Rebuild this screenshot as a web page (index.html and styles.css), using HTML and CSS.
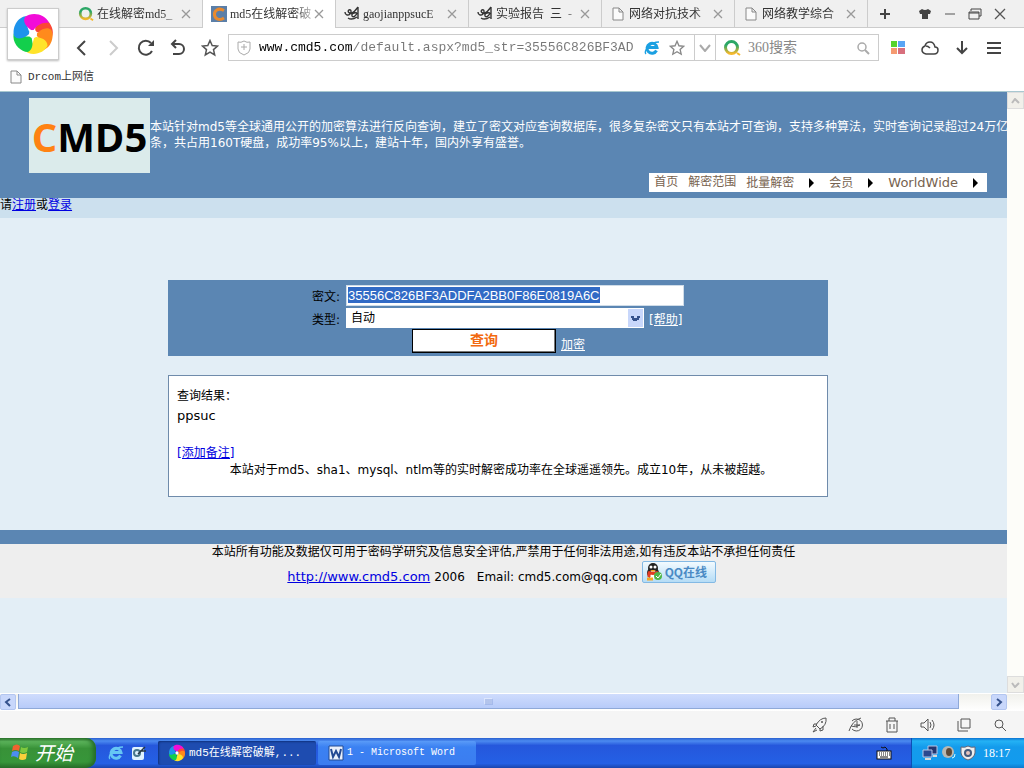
FILE: index.html
```html
<!DOCTYPE html>
<html lang="zh-CN">
<head>
<meta charset="utf-8">
<title>md5在线解密破解</title>
<link rel="stylesheet" href="styles.css">
</head>
<body>
<svg class="defs" width="0" height="0" aria-hidden="true">
  <defs>
    <linearGradient id="ring" x1="0" y1="0" x2="0" y2="1"><stop offset="0.3" stop-color="#2ba766"/><stop offset="1" stop-color="#f5b82c"/></linearGradient>
    <symbol id="so" viewBox="0 0 18 18"><circle cx="8.500" cy="8.500" r="6" fill="none" stroke="url(#ring)" stroke-width="3"/><path d="M14 14l3 2" stroke="#f5b82c" stroke-width="2"/></symbol>
    <symbol id="close" viewBox="0 0 10 10"><path d="M1 1l8 8M9 1l-8 8" stroke="#999" stroke-width="1.300" fill="none"/></symbol>
    <symbol id="doc" viewBox="0 0 12 14"><path d="M1 1h6l4 4v8H1zM7 1v4h4" fill="#fbfbfb" stroke="#888"/></symbol>
    <symbol id="reader" viewBox="0 0 16 16"><path d="M1 6c0 3 3 4 5 2s1-5-1-4 0 4 3 3 4-4 6-6M14 1v12M13 7c-3-1-6 1-5 3s4 0 5-3M4 12c3 2 6 1 9-1" fill="none" stroke="#333" stroke-width="1.400"/></symbol>
    <symbol id="pinwheel" viewBox="-22 -22 44 44">
      <path transform="rotate(55)" d="M0-3C-6-6-11-12-8-17-2-22 12-21 15-10 9-12 4-9 0-3z" fill="#fb4836"/>
      <path transform="rotate(103)" d="M0-3C-6-6-11-12-8-17-2-22 12-21 15-10 9-12 4-9 0-3z" fill="#ff8a1c"/>
      <path transform="rotate(155)" d="M0-3C-6-6-11-12-8-17-2-22 12-21 15-10 9-12 4-9 0-3z" fill="#ffe32a"/>
      <path transform="rotate(222)" d="M0-3C-6-6-11-12-8-17-2-22 14-21 16-8 9-10 4-8 0-3z" fill="#13cf4c"/>
      <path transform="rotate(288)" d="M0-3C-6-6-11-12-8-17-2-22 14-21 16-8 9-10 4-8 0-3z" fill="#1d93ec"/>
      <path d="M0-3C-6-6-11-12-8-17-2-22 12-21 16-11 9-12 4-9 0-3z" fill="#f20cd8"/>
      <circle r="4" fill="#fff"/>
    </symbol>
    <symbol id="ie" viewBox="0 0 16 16"><path d="M12.500 10.500A5 5 0 1 1 13 7.500H4.500" fill="none" stroke="currentColor" stroke-width="3"/><path d="M2 14C-1 12 6 2 15 2" fill="none" stroke="currentColor" stroke-width="1.500"/></symbol>
    <symbol id="star" viewBox="0 0 18 18"><path d="M9 1.500l2.200 5 5.300.500-4 3.600 1.200 5.400L9 13.200 4.300 16l1.200-5.400-4-3.600 5.300-.500z" fill="none" stroke="currentColor" stroke-width="1.500"/></symbol>
    <symbol id="lens" viewBox="0 0 14 14"><circle cx="6" cy="6" r="4" fill="none" stroke="currentColor" stroke-width="1.500"/><path d="M9 9l4 4" stroke="currentColor" stroke-width="2"/></symbol>
  </defs>
</svg>

<header class="chrome">
  <div class="brand"><svg width="44" height="44"><use href="#pinwheel"/></svg></div>
  <div class="tabs">
    <div class="tab"><svg width="16" height="16"><use href="#so"/></svg><span class="tab-text">在线解密md5_</span><button class="plain" aria-label="关闭"><svg width="10" height="10"><use href="#close"/></svg></button></div>
    <div class="tab active"><svg width="16" height="16" viewBox="0 0 16 16"><path d="M0 0h16v16H0z" fill="#5b7fa8"/><path d="M13 4.500C7 1 3 5 3.500 9s5 6 9.500 3" fill="none" stroke="#e88a2e" stroke-width="3"/></svg><span class="tab-text">md5在线解密破</span><button class="plain" aria-label="关闭"><svg width="10" height="10"><use href="#close"/></svg></button></div>
    <div class="tab"><svg width="16" height="16"><use href="#reader"/></svg><span class="tab-text">gaojianppsucE</span><button class="plain" aria-label="关闭"><svg width="10" height="10"><use href="#close"/></svg></button></div>
    <div class="tab"><svg width="16" height="16"><use href="#reader"/></svg><span class="tab-text">实验报告&nbsp; 三&nbsp; -</span><button class="plain" aria-label="关闭"><svg width="10" height="10"><use href="#close"/></svg></button></div>
    <div class="tab"><svg width="16" height="14"><use href="#doc"/></svg><span class="tab-text">网络对抗技术</span><button class="plain" aria-label="关闭"><svg width="10" height="10"><use href="#close"/></svg></button></div>
    <div class="tab"><svg width="16" height="14"><use href="#doc"/></svg><span class="tab-text">网络教学综合</span><button class="plain" aria-label="关闭"><svg width="10" height="10"><use href="#close"/></svg></button></div>
    <button class="plain add" aria-label="新标签"><svg width="12" height="12"><path d="M6 1v10M1 6h10" stroke="#444" stroke-width="2"/></svg></button>
    <div class="window-tools">
      <button class="plain" aria-label="皮肤"><svg width="14" height="12"><path d="M4 1q3 2 6 0l3 2-1 3h-2v5H4V6H2L1 3z" fill="#444"/></svg></button>
      <button class="plain" aria-label="最小化"><svg width="12" height="12"><path d="M1 6h10" stroke="#555"/></svg></button>
      <button class="plain" aria-label="还原"><svg width="14" height="12"><path d="M3 3V1h10v7h-2M1 4h10v7H1zM1 5h10" fill="none" stroke="#444"/></svg></button>
      <button class="plain" aria-label="关闭窗口"><svg width="12" height="12"><path d="M1 1l10 10M11 1L1 11" stroke="#555" stroke-width="1.300"/></svg></button>
    </div>
  </div>
  <div class="toolbar">
    <button class="plain tool" aria-label="后退"><svg width="16" height="18"><path d="M11 2L4 9l7 7" fill="none" stroke="#444" stroke-width="2"/></svg></button>
    <button class="plain tool" aria-label="前进"><svg width="16" height="18"><path d="M4 2l7 7-7 7" fill="none" stroke="#ccc" stroke-width="2"/></svg></button>
    <button class="plain tool" aria-label="刷新"><svg width="18" height="18"><path d="M15 12A7 7 0 1 1 14 4" fill="none" stroke="#444" stroke-width="2"/><path d="M17 1v6h-6z" fill="#444"/></svg></button>
    <button class="plain tool" aria-label="恢复"><svg width="18" height="18"><path d="M7 1L3 5l4 4M3 5h7a5 5 0 0 1 0 10H4" fill="none" stroke="#444" stroke-width="2"/></svg></button>
    <button class="plain tool" aria-label="收藏"><svg width="18" height="18"><use href="#star"/></svg></button>
    <div class="address">
      <svg class="shield" width="14" height="16"><path d="M1 2q3 1 6-1 3 2 6 1v7q0 4-6 6-6-2-6-6zM7 4v6M4 7h6" fill="none" stroke="#aaa"/></svg>
      <input class="url" type="text" aria-label="地址" value="www.cmd5.com/default.aspx?md5_str=35556C826BF3AD">
      <svg class="ie-blue" width="16" height="16"><use href="#ie"/></svg>
      <button class="plain address-star" aria-label="收藏网址"><svg width="16" height="16"><use href="#star"/></svg></button>
      <button class="plain drop" aria-label="展开"><svg width="12" height="8"><path d="M1 1l5 6 5-6" fill="none" stroke="#aaa" stroke-width="2"/></svg></button>
      <svg class="so-search" width="18" height="18"><use href="#so"/></svg>
      <input class="search" type="text" aria-label="搜索" placeholder="360搜索">
      <button class="plain lens" aria-label="搜索"><svg width="14" height="14"><use href="#lens"/></svg></button>
    </div>
    <button class="plain tool" aria-label="应用"><svg width="14" height="14"><path d="M0 0h6v6H0z" fill="#56d32c"/><path d="M7 0h7v6H7z" fill="#58a5f5"/><path d="M0 7h6v6H0z" fill="#f59a70"/><path d="M7 7h7v6H7z" fill="#d86f7d"/></svg></button>
    <button class="plain tool" aria-label="云"><svg width="18" height="14"><path d="M5 13Q1 12 1 9t3-4q1-4 5-4t5 5q3 0 3 3 0 4-4 4zM5 5q2 0 4 2" fill="none" stroke="#444" stroke-width="1.500"/></svg></button>
    <button class="plain tool" aria-label="下载"><svg width="14" height="14"><path d="M7 0v12M2 7l5 5 5-5" fill="none" stroke="#444" stroke-width="2"/></svg></button>
    <button class="plain tool" aria-label="菜单"><svg width="14" height="12"><path d="M0 1h14M0 6h14M0 11h14" stroke="#444" stroke-width="2"/></svg></button>
  </div>
  <div class="bookmarks"><svg width="12" height="14"><use href="#doc"/></svg><a class="bookmark" href="#">Drcom上网信</a></div>
</header>

<div class="view">
  <main class="page">
    <div class="banner">
      <div class="intro">
        <div class="logo"><span class="logo-c">C</span>MD5</div>
        <p class="blurb">本站针对md5等全球通用公开的加密算法进行反向查询，建立了密文对应查询数据库，很多复杂密文只有本站才可查询，支持多种算法，实时查询记录超过24万亿<br>条，共占用160T硬盘，成功率95%以上，建站十年，国内外享有盛誉。</p>
      </div>
      <nav class="menu">
        <a href="#">首页</a><a href="#">解密范围</a><a class="more" href="#">批量解密</a><a class="more" href="#">会员</a><a class="more latin" href="#">WorldWide</a>
      </nav>
    </div>
    <div class="login">请<a href="#">注册</a>或<a href="#">登录</a></div>
    <div class="content">
      <form class="query">
        <label class="label" for="cipher">密文:</label>
        <input class="field" id="cipher" type="text" value="35556C826BF3ADDFA2BB0F86E0819A6C">
        <label class="label" for="kind">类型:</label>
        <div class="row"><select class="kind" id="kind"><option>自动</option></select><a class="light" href="#">[帮助]</a></div>
        <div class="row actions"><button class="submit" type="button">查询</button><a class="light low" href="#">加密</a></div>
      </form>
      <section class="result">
        <p>查询结果：</p>
        <p class="latin">ppsuc</p>
        <p class="note"><a href="#">[添加备注]</a></p>
        <p class="claim">本站对于md5、sha1、mysql、ntlm等的实时解密成功率在全球遥遥领先。成立10年，从未被超越。</p>
      </section>
    </div>
    <footer class="footer">
      <p>本站所有功能及数据仅可用于密码学研究及信息安全评估,严禁用于任何非法用途,如有违反本站不承担任何责任</p>
      <div class="contact"><a class="latin" href="#">http://www.cmd5.com</a><span class="year">2006</span><span>Email: cmd5.com@qq.com</span>
        <button class="qq" type="button"><svg width="18" height="18"><ellipse cx="8" cy="10" rx="6" ry="6" fill="#222"/><circle cx="8" cy="5" r="5" fill="#222"/><ellipse cx="8" cy="12" rx="4" ry="4" fill="#fff"/><circle cx="6" cy="4" r="1.500" fill="#fff"/><circle cx="10" cy="4" r="1.500" fill="#fff"/><path d="M5 7h6l-3 2z" fill="#f4a623"/><path d="M3 9q5 3 10 0M4 10v4" stroke="#e33b22" stroke-width="3" fill="none"/><path d="M2 16h6" stroke="#f4a623" stroke-width="3"/><circle cx="13" cy="13" r="4" fill="#4eb648"/><path d="M11 13l2 2 3-4" stroke="#fff" fill="none"/></svg>QQ在线</button>
      </div>
    </footer>
  </main>
  <div class="vbar"><button class="vbtn" aria-label="向上"><svg width="9" height="6"><path d="M1 5l3-4 4 4" fill="none" stroke="#bbb" stroke-width="2"/></svg></button><button class="vbtn" aria-label="向下"><svg width="9" height="6"><path d="M1 1l3 4 4-4" fill="none" stroke="#bbb" stroke-width="2"/></svg></button></div>
</div>
<div class="hbar">
  <button class="hbtn" aria-label="向左"><svg width="8" height="9"><path d="M6 1L2 4l4 4" fill="none" stroke="#35528c" stroke-width="2"/></svg></button>
  <div class="thumb"><svg width="9" height="8"><path d="M1 1v6M3 1v6M5 1v6M7 1v6" stroke="#f3f7ff"/><path d="M2 2v6M4 2v6M6 2v6M8 2v6" stroke="#8ca4dc"/></svg></div>
  <button class="hbtn" aria-label="向右"><svg width="8" height="9"><path d="M2 1l4 3-4 4" fill="none" stroke="#35528c" stroke-width="2"/></svg></button>
</div>
<div class="status">
  <button class="plain" aria-label="加速"><svg width="16" height="16"><path d="M14 1Q8 1 4 8l4 4q7-4 6-11zM5 7H2l-1 3 3-1M8 11v3l3-1V9M4 11l-3 4 4-2" fill="none" stroke="#555"/><circle cx="10" cy="5" r="1" fill="#555"/></svg></button>
  <button class="plain" aria-label="模式"><svg width="16" height="16"><path d="M4 4a6 6 0 1 1 0 8M1 14Q4 4 13 1M3 9q4 2 9-1M9 4v7M6 8h6" fill="none" stroke="#555"/></svg></button>
  <button class="plain" aria-label="清理"><svg width="14" height="16"><path d="M1 4h12M4 4V1h6v3M2 4v11h10V4M5 7v5M9 7v5" fill="none" stroke="#555"/></svg></button>
  <button class="plain" aria-label="声音"><svg width="16" height="14"><path d="M1 5h3l4-4v12L4 9H1zM10 4q2 3 0 6M12 2q4 5 0 10" fill="none" stroke="#555"/></svg></button>
  <button class="plain" aria-label="窗口"><svg width="14" height="14"><path d="M4 1h9v9H4zM1 3v10h10" fill="none" stroke="#555"/></svg></button>
  <button class="plain" aria-label="缩放"><svg width="12" height="12" viewBox="0 0 12 12"><circle cx="5" cy="5" r="4" fill="none" stroke="#555"/><path d="M8 8l4 4" stroke="#555"/></svg></button>
</div>
<footer class="taskbar">
  <button class="start"><svg width="20" height="20"><path d="M3 4q4-3 7 0L9 9Q5 7 2 9z" fill="#f0632f"/><path d="M11 5q3 2 7 0l-1 5q-4 2-7 0z" fill="#7fc83e"/><path d="M2 10q4-2 7 0l-1 6q-4-3-7-1z" fill="#4d8df1"/><path d="M10 11q3 2 7 0l-1 6q-4 2-7 0z" fill="#fbd03b"/></svg>开始</button>
  <div class="quick"><svg class="ie-light" width="16" height="16"><use href="#ie"/></svg><svg width="16" height="16"><rect x="1" y="2" width="12" height="13" rx="2" fill="#dff2ff"/><circle cx="6" cy="8" r="3" fill="none" stroke="#47768b" stroke-width="2"/><path d="M7 9l7-7M9 6h6" stroke="#263744" stroke-width="1.500"/></svg></div>
  <button class="task pressed"><svg width="18" height="18"><use href="#pinwheel"/></svg>md5在线解密破解,...</button>
  <button class="task word"><svg width="16" height="16"><path d="M1 1h14v14H1z" fill="#e9f0fb" stroke="#234a93"/><path d="M3 4l2 8 3-6 3 6 2-8" fill="none" stroke="#234a93" stroke-width="2"/></svg>1 - Microsoft Word</button>
  <svg class="keyboard" width="16" height="14"><path d="M5 1l2 1 2-1 2 2v2" fill="none" stroke="#111"/><rect x="1" y="5" width="14" height="8" fill="#fff" stroke="#111"/><path d="M3 7h11M3 9h11" stroke="#111" stroke-dasharray="1 1"/><path d="M4 11h8" stroke="#111"/></svg>
  <div class="tray">
    <svg width="16" height="16"><path d="M6 1h9v8H6z" fill="#24356e" stroke="#b9c6e6"/><path d="M1 5h9v7H1z" fill="#2b478f" stroke="#b9c6e6"/><path d="M3 14h6M11 11h4" stroke="#d8d8d8" stroke-width="2"/></svg>
    <svg width="16" height="16"><circle cx="7" cy="7" r="6" fill="#b8b8b2"/><ellipse cx="8" cy="7" rx="3" ry="4" fill="#5d4938"/><path d="M11 13q3 0 3-4" fill="none" stroke="#dff" /></svg>
    <svg width="16" height="16"><path d="M1 2q4 1 7-1 3 2 7 1v6q-1 5-7 7-6-2-7-7z" fill="#eee" stroke="#667"/><circle cx="8" cy="8" r="4" fill="#435a7d"/><circle cx="8" cy="8" r="2" fill="#e8c3bc"/></svg>
    <span class="clock">18:17</span>
  </div>
</footer>
</body>
</html>
```
FILE: styles.css
```css
* { box-sizing: border-box; }
body {
  margin: 0;
  min-height: 100vh;
  display: flex;
  flex-direction: column;
  font: 12px/16px "DejaVu Sans", "Noto Sans CJK SC", sans-serif;
  color: #000;
  background: #fff;
}
p { margin: 0; }
svg { display: block; flex: none; }
.defs { position: absolute; }
a { color: #0000e0; }
.latin { font-size: 13px; }
.plain {
  display: flex;
  align-items: center;
  justify-content: center;
  padding: 0;
  border: 0;
  background: none;
  color: #555;
}

/* browser frame */
.chrome {
  position: relative;
  border-bottom: 1px solid #a8c8d0;
}
.brand {
  position: absolute;
  left: 7px;
  top: 8px;
  padding: 3px;
  border: 1px solid #ccc;
  background: #fff;
  box-shadow: 0 1px 2px #bbb;
}
.tabs {
  display: flex;
  height: 28px;
  padding-left: 70px;
  background: #f0f0f0;
  box-shadow: inset 0 -1px #ccc;
}
.tab {
  display: flex;
  align-items: center;
  gap: 3px;
  width: 133px;
  padding: 0 11px 0 8px;
  border-right: 1px solid #ccc;
  color: #333;
}
.tab.active { background: #fff; }
.tab-text {
  flex: 1;
  white-space: nowrap;
  font: 12px/16px "Liberation Serif", "Noto Sans CJK SC", serif;
  mask-image: linear-gradient(90deg, #000 80%, #0005);
}
.add { width: 34px; }
.window-tools {
  display: flex;
  gap: 12px;
  margin-left: auto;
  padding-right: 18px;
}
.toolbar {
  display: flex;
  align-items: center;
  height: 39px;
  padding: 0 14px 0 66px;
}
.tool { width: 32px; height: 30px; }
.address {
  flex: 1;
  display: flex;
  align-items: center;
  height: 27px;
  margin: 0 3px 0 2px;
  border: 1px solid #ccc;
}
.shield { margin: 0 8px; }
.url {
  flex: 1;
  min-width: 0;
  padding: 0;
  border: 0;
  outline: 0;
  font: 13px/20px "Liberation Mono", monospace;
  color: transparent;
  background: linear-gradient(90deg, #000 94px, #777 94px);
  background-clip: text;
}
.ie-blue { color: #1ba0e2; }
.address-star { width: 34px; color: #888; }
.drop {
  width: 22px;
  height: 25px;
  border: solid #ccc;
  border-width: 0 1px;
}
.so-search { margin: 0 7px; }
.search {
  width: 100px;
  padding: 0;
  border: 0;
  font: 14px/20px "Liberation Serif", "Noto Sans CJK SC", serif;
}
.search::placeholder { color: #888; }
.lens { width: 30px; color: #aaa; }
.bookmarks {
  display: flex;
  align-items: center;
  gap: 6px;
  height: 24px;
  padding: 0 10px 4px;
}
.bookmark {
  font: 11px/16px "Liberation Mono", "Noto Sans CJK SC", monospace;
  color: #333;
  text-decoration: none;
}

/* web page */
.view { flex: 1; display: flex; }
.page { flex: 1; min-width: 0; background: #e3eef6; }
.banner {
  display: flex;
  flex-direction: column;
  height: 106px;
  padding: 6px 0 0 29px;
  background: #5b86b3;
}
.intro { display: flex; height: 75px; }
.logo {
  flex: none;
  width: 121px;
  background: #dbebeb;
  text-align: center;
  font: bold 40px/78px "Open Sans", sans-serif;
}
.logo-c { color: #ff8212; }
.blurb {
  padding-top: 21px;
  overflow: hidden;
  white-space: nowrap;
  color: #fff;
}
.menu {
  display: flex;
  align-self: flex-end;
  gap: 10px;
  height: 19px;
  margin-right: 20px;
  padding: 0 9px 0 5px;
  background: #fff;
  line-height: 18px;
}
.menu a { color: #776350; text-decoration: none; }
.more { display: flex; align-items: center; gap: 15px; }
.more::after {
  content: "";
  border: solid transparent;
  border-width: 5px 0 5px 5px;
  border-left-color: #000;
}
.menu .more + .more { margin-left: 5px; }
.login { height: 20px; line-height: 14px; background: #cce0ee; }
.content {
  display: flex;
  flex-direction: column;
  align-items: center;
  gap: 19px;
  padding: 62px 11px 33px 0;
}
.query {
  display: grid;
  grid-template-columns: 172px 1fr;
  grid-template-rows: 23px 21px 24px;
  column-gap: 6px;
  align-items: start;
  width: 660px;
  height: 76px;
  padding-top: 5px;
  background: #5b86b3;
}
.label { line-height: 24px; text-align: right; }
.field {
  width: 338px;
  height: 21px;
  padding: 0 1px;
  border: 1px solid #cfdce8;
  font: 13px/16px "Liberation Sans", sans-serif;
  color: #fff;
  background: linear-gradient(#316ac5, #316ac5) 1px 1px / 252px 16px no-repeat #fff;
}
.row { display: flex; gap: 5px; }
.kind {
  appearance: none;
  width: 298px;
  height: 20px;
  padding: 0 4px;
  border: 1px solid #fff;
  border-radius: 0;
  font: 12px/16px "DejaVu Sans", "Noto Sans CJK SC", sans-serif;
  color: #000;
  background:
    linear-gradient(45deg, transparent 30%, #35528c 30% 70%, transparent 70%) right 7px center / 5px 5px no-repeat,
    linear-gradient(-45deg, transparent 30%, #35528c 30% 70%, transparent 70%) right 3px center / 5px 5px no-repeat,
    linear-gradient(#c8d7fb, #c8d7fb) right / 15px 18px no-repeat #fff;
}
.light { color: #fff; line-height: 24px; }
.actions { grid-column: 1 / 3; padding-left: 244px; }
.submit {
  width: 144px;
  height: 24px;
  padding: 0 0 4px;
  border: 1px solid #000;
  box-shadow: inset -1px -1px #777;
  background: #fff;
  font: bold 14px/16px "Noto Sans CJK SC", sans-serif;
  color: #f26a10;
}
.low { line-height: 32px; }
.result {
  width: 660px;
  height: 122px;
  padding: 10px 8px;
  border: 1px solid #6f8bab;
  background: #fff;
  line-height: 20px;
}
.note { margin-top: 17px; }
.claim { padding-left: 6px; text-align: center; line-height: 14px; }
.footer {
  border-top: 14px solid #5b86b3;
  height: 68px;
  background: #eee;
  text-align: center;
  white-space: nowrap;
}
.contact {
  display: flex;
  justify-content: center;
  align-items: center;
  padding-right: 4px;
  height: 34px;
}
.year { margin: 0 12px 0 4px; }
.qq {
  display: flex;
  align-items: center;
  gap: 2px;
  width: 74px;
  height: 22px;
  margin: 0 0 10px 4px;
  padding: 0 2px;
  border: 1px solid #83b9e4;
  border-radius: 2px;
  background: linear-gradient(#f2faff, #b5dcf6);
  font: bold 12px/16px "Noto Sans CJK SC", sans-serif;
  color: #4a8ac4;
}

/* scroll bars */
.vbar {
  display: flex;
  flex-direction: column;
  justify-content: space-between;
  width: 17px;
  background: #fdfdf9;
}
.vbtn {
  display: grid;
  place-items: center;
  height: 17px;
  padding: 0;
  border: 1px solid #ddd;
  background: #f1f0ea;
}
.hbar {
  display: flex;
  height: 18px;
  padding-right: 17px;
  border-top: 1px solid #fff;
  background: linear-gradient(#f1f1ec, #fff);
}
.hbtn {
  display: grid;
  place-items: center;
  width: 16px;
  height: 16px;
  padding: 0;
  border: 1px solid #b3c6f0;
  border-radius: 2px;
  background: #c8d7fb;
}
.thumb {
  flex: 1;
  display: grid;
  place-items: center;
  height: 15px;
  margin: 0 32px 0 2px;
  border: solid #8fa9d8;
  border-width: 0 1px 1px;
  background: linear-gradient(#cfdcfd, #b7cbf9);
}
.status {
  display: flex;
  justify-content: flex-end;
  height: 27px;
  padding-right: 6px;
  background: #f5f5f5;
}
.status .plain { width: 36px; }

/* desktop task bar */
.taskbar {
  display: flex;
  align-items: center;
  height: 30px;
  background: linear-gradient(#2a60cf, #4b8af0 10%, #2557dc 25%, #2460e5 85%, #1a45ad);
  color: #fff;
}
.start {
  display: flex;
  align-items: center;
  gap: 5px;
  width: 96px;
  height: 30px;
  padding: 0 0 2px 10px;
  border: 0;
  border-radius: 0 10px 10px 0;
  background: linear-gradient(#317a31, #5bb35a 12%, #389238 35%, #37963a 80%, #2a702a);
  box-shadow: inset -3px 0 4px #246b28;
  color: #fff;
  font: italic 19px/24px "Noto Sans CJK SC", sans-serif;
}
.quick { display: flex; gap: 7px; width: 62px; padding-left: 12px; }
.ie-light { color: #66c6f4; }
.task {
  display: flex;
  align-items: center;
  gap: 3px;
  width: 158px;
  height: 24px;
  margin-right: 2px;
  padding: 0 10px;
  border: 0;
  border-radius: 2px;
  background: linear-gradient(#5a9bf8, #3b81f2 25%, #3b7df0);
  font: 11px/16px "Liberation Mono", "Noto Sans CJK SC", monospace;
  color: #fff;
  white-space: nowrap;
}
.task.word { font-size: 10px; }
.task.pressed { background: #1e4cb0; box-shadow: inset 1px 1px 2px #10317e; }
.keyboard { margin: 0 19px 0 auto; }
.tray {
  display: flex;
  align-items: center;
  gap: 3px;
  width: 113px;
  height: 30px;
  padding-left: 10px;
  border-left: 1px solid #0c4fb5;
  background: linear-gradient(#0c72d0, #24b2f5 10%, #149bec 30%, #129bee 85%, #0d79cc);
}
.clock { margin-left: 4px; font: 12px/16px "Liberation Serif", serif; }
```
